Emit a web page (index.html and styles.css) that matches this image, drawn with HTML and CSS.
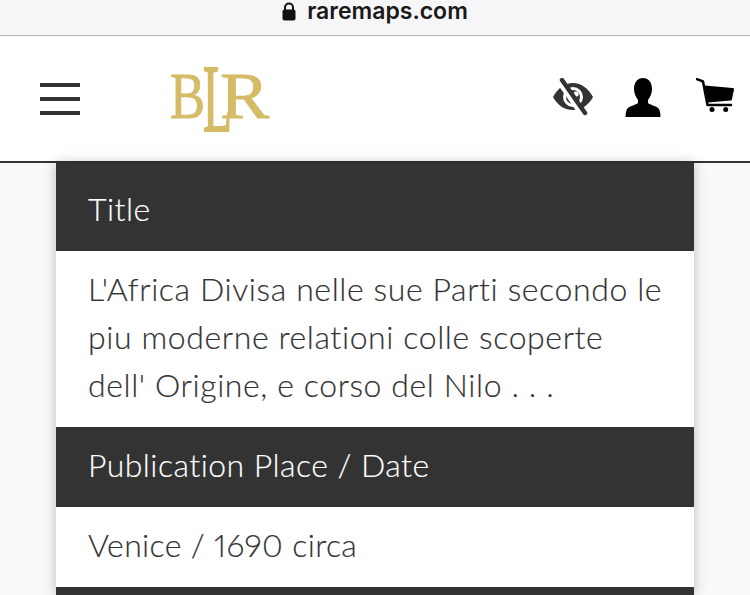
FILE: index.html
```html
<!DOCTYPE html>
<html lang="en">
<head>
    <meta charset="UTF-8">
    <meta name="viewport" content="width=device-width, initial-scale=1.0">
    <title>Barry Lawrence Ruderman Antique Maps</title>
    <link rel="stylesheet" href="styles.css">
</head>
<body>

    <div class="address-bar">
        <svg class="lock" width="14" height="19" viewBox="0 0 14 19">
            <path d="M3 8V5.500a4 4 0 0 1 8 0V8" fill="none" stroke="#111" stroke-width="2"/>
            <rect x="0.500" y="7.500" width="13" height="11" rx="2" fill="#111"/>
        </svg>
        <span>raremaps.com</span>
    </div>

    <header class="site-header">
        <div class="menu-icon"><span></span><span></span><span></span></div>
        <div class="logo"><span class="logo-b">B</span><span class="logo-l">L</span><span class="logo-r">R</span></div>
        <div class="header-icons">
            <svg class="icon-eye" width="40" height="38" viewBox="0 0 40 38">
                <path fill-rule="evenodd" fill="#333" d="M0 19C5 10 12 5 20 5s15 5 20 14c-5 9-12 13-20 13S5 28 0 19Zm20-10a10 10 0 1 0 0 20 10 10 0 0 0 0-20Z"/>
                <circle cx="20" cy="19" r="7" fill="#333"/>
                <circle cx="23" cy="16" r="2.600" fill="#fff"/>
                <path d="M6 3 29 36" stroke="#fff" stroke-width="6"/>
                <path d="M9 2 32 35" stroke="#333" stroke-width="4.500" stroke-linecap="round"/>
            </svg>
            <svg class="icon-person" width="36" height="39" viewBox="0 0 36 39">
                <path fill="#000" d="M18 0c5.500 0 9 4.500 9 11 0 4.500-2 8.500-4 11v3c2 2 9 3 11 6 1 2 1.500 5 1.500 8H.500c0-3 .5-6 1.500-8 2-3 9-4 11-6v-3c-2-2.500-4-6.500-4-11C9 4.500 12.500 0 18 0Z"/>
            </svg>
            <svg class="icon-cart" width="38" height="34" viewBox="0 0 38 34">
                <path fill="none" stroke="#000" stroke-width="2.500" stroke-linecap="round" stroke-linejoin="round" d="M1 1.200 7 3.500l4.500 23.500H35"/>
                <path fill="#000" d="M8.500 7.500 36.500 10c1 0 1.500 .5 1.500 1.500l-2 9.500c0 1-.5 1.500-1.500 1.500L12 24.500Z"/>
                <circle cx="16" cy="31.500" r="2.500" fill="#000"/>
                <circle cx="29.700" cy="31.500" r="2.500" fill="#000"/>
            </svg>
        </div>
    </header>

    <main class="details-card">
        <div class="row-head title-head">Title</div>
        <div class="row-body">L'Africa Divisa nelle sue Parti secondo le piu moderne relationi colle scoperte dell' Origine, e corso del Nilo . . .</div>
        <div class="row-head">Publication Place / Date</div>
        <div class="row-body row-short">Venice / 1690 circa</div>
        <div class="row-head row-cut"></div>
    </main>

</body>
</html>
```

FILE: styles.css
```css
html, body {
    height: 100%;
}
body {
    margin: 0;
    overflow: hidden;
    background-color: #f9f9f9;
    font-family: Lato, "Open Sans", sans-serif;
    font-variant-ligatures: none;
}
.address-bar {
    height: 35px;
    background-color: #f6f6f8;
    border-bottom: 1px solid #b4b4b4;
    display: flex;
    justify-content: center;
    align-items: flex-start;
    gap: 11px;
    font-family: Inter, sans-serif;
    font-weight: 600;
    font-size: 23px;
    line-height: 23px;
    color: #1a1a1a;
}
.lock {
    margin-top: 2px;
}
.site-header {
    height: 125px;
    background-color: #fff;
    border-bottom: 2px solid #333;
    display: flex;
    align-items: center;
    padding: 0 16px 0 40px;
}
.menu-icon {
    width: 40px;
    height: 32px;
    display: flex;
    flex-direction: column;
    justify-content: space-between;
}
.menu-icon span {
    height: 4px;
    background-color: #333;
}
.logo {
    margin: 0 0 6px 90px;
    display: flex;
    align-items: center;
    font-family: "Liberation Serif", serif;
    font-size: 66px;
    line-height: 66px;
    color: #d6bb66;
    -webkit-text-stroke: 0.8px #d6bb66;
}
.logo-b {
    margin-right: -11px;
    transform: scaleX(0.8);
    transform-origin: left center;
}
.logo-l {
    margin-right: -23px;
    transform: translateY(3px) scale(0.72, 1.45);
    transform-origin: left center;
    -webkit-text-stroke: 1.4px #d6bb66;
}
.logo-r {
    transform: scaleX(1.12);
    transform-origin: left center;
}
.header-icons {
    margin: 0 0 2px auto;
    display: flex;
    align-items: flex-start;
    gap: 32px;
}
.icon-cart {
    margin-left: 3px;
}
.details-card {
    width: 638px;
    margin-left: 56px;
    box-shadow: 0 0 12px rgba(0, 0, 0, 0.25);
}
.row-head {
    height: 80px;
    padding: 0 32px;
    background-color: #333;
    color: #fff;
    font-size: 32px;
    font-weight: 300;
    letter-spacing: 0.45px;
    line-height: 76px;
    -webkit-text-stroke: 0.15px #fff;
}
.title-head {
    height: 88px;
    line-height: 92px;
}
.row-cut {
    height: 8px;
}
.row-body {
    padding: 14px 30px 18px 32px;
    background-color: #fff;
    color: #333;
    font-size: 32px;
    font-weight: 300;
    letter-spacing: 0.6px;
    line-height: 48px;
    font-variant-numeric: proportional-nums;
    -webkit-text-stroke: 0.15px #333;
}
.row-short {
    letter-spacing: 0.35px;
}
```
